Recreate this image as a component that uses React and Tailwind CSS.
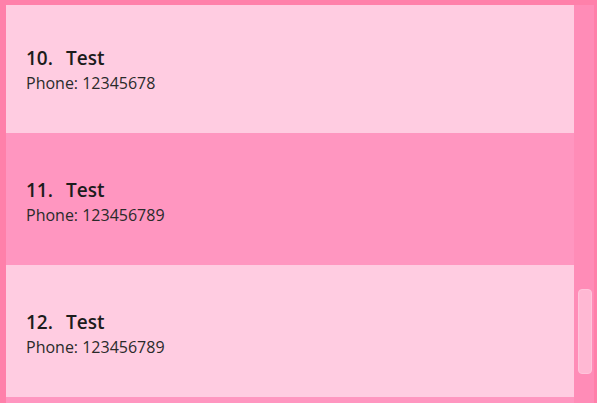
const people = [
  { index: 10, name: "Test", phone: "12345678" },
  { index: 11, name: "Test", phone: "123456789" },
  { index: 12, name: "Test", phone: "123456789" },
];

function PersonCard({ person, odd }) {
  return (
    <div
      className={`h-[132px] shrink-0 pl-5 pt-[45px] ${
        odd ? "bg-[#ff96c0]" : "bg-[#ffcce1]"
      }`}
    >
      <div className="flex text-[19px] leading-[24px] font-semibold text-[#1c1c1c]">
        <span>{person.index}.</span>
        <span className="ml-[13px]">{person.name}</span>
      </div>
      <p className="mt-[3px] text-[16px] leading-[20px] text-[#2a2a2a]">
        Phone: {person.phone}
      </p>
    </div>
  );
}

export default function App() {
  return (
    <div
      className="w-[597px] h-[403px] bg-[#ff80aa] pl-[6px] pt-[5px] pr-[3px] overflow-hidden"
      style={{ fontFamily: '"Open Sans", "Noto Sans", sans-serif' }}
    >
      <div className="flex h-[398px] overflow-hidden">
        {/* list rows; next row peeks in at the bottom */}
        <div className="w-[568px] flex flex-col -mt-[4px]">
          {people.map((p, i) => (
            <PersonCard key={p.index} person={p} odd={i % 2 === 1} />
          ))}
          <div className="h-[20px] shrink-0 bg-[#ff96c0]" />
        </div>

        {/* scrollbar track */}
        <div className="w-[20px] bg-[#ff8cb7] pt-[284px] pl-[4px] pr-[2px]">
          <div className="h-[85px] rounded-[4px] bg-[#ffb8d3] border border-[#ffc4db]" />
        </div>
      </div>
    </div>
  );
}
